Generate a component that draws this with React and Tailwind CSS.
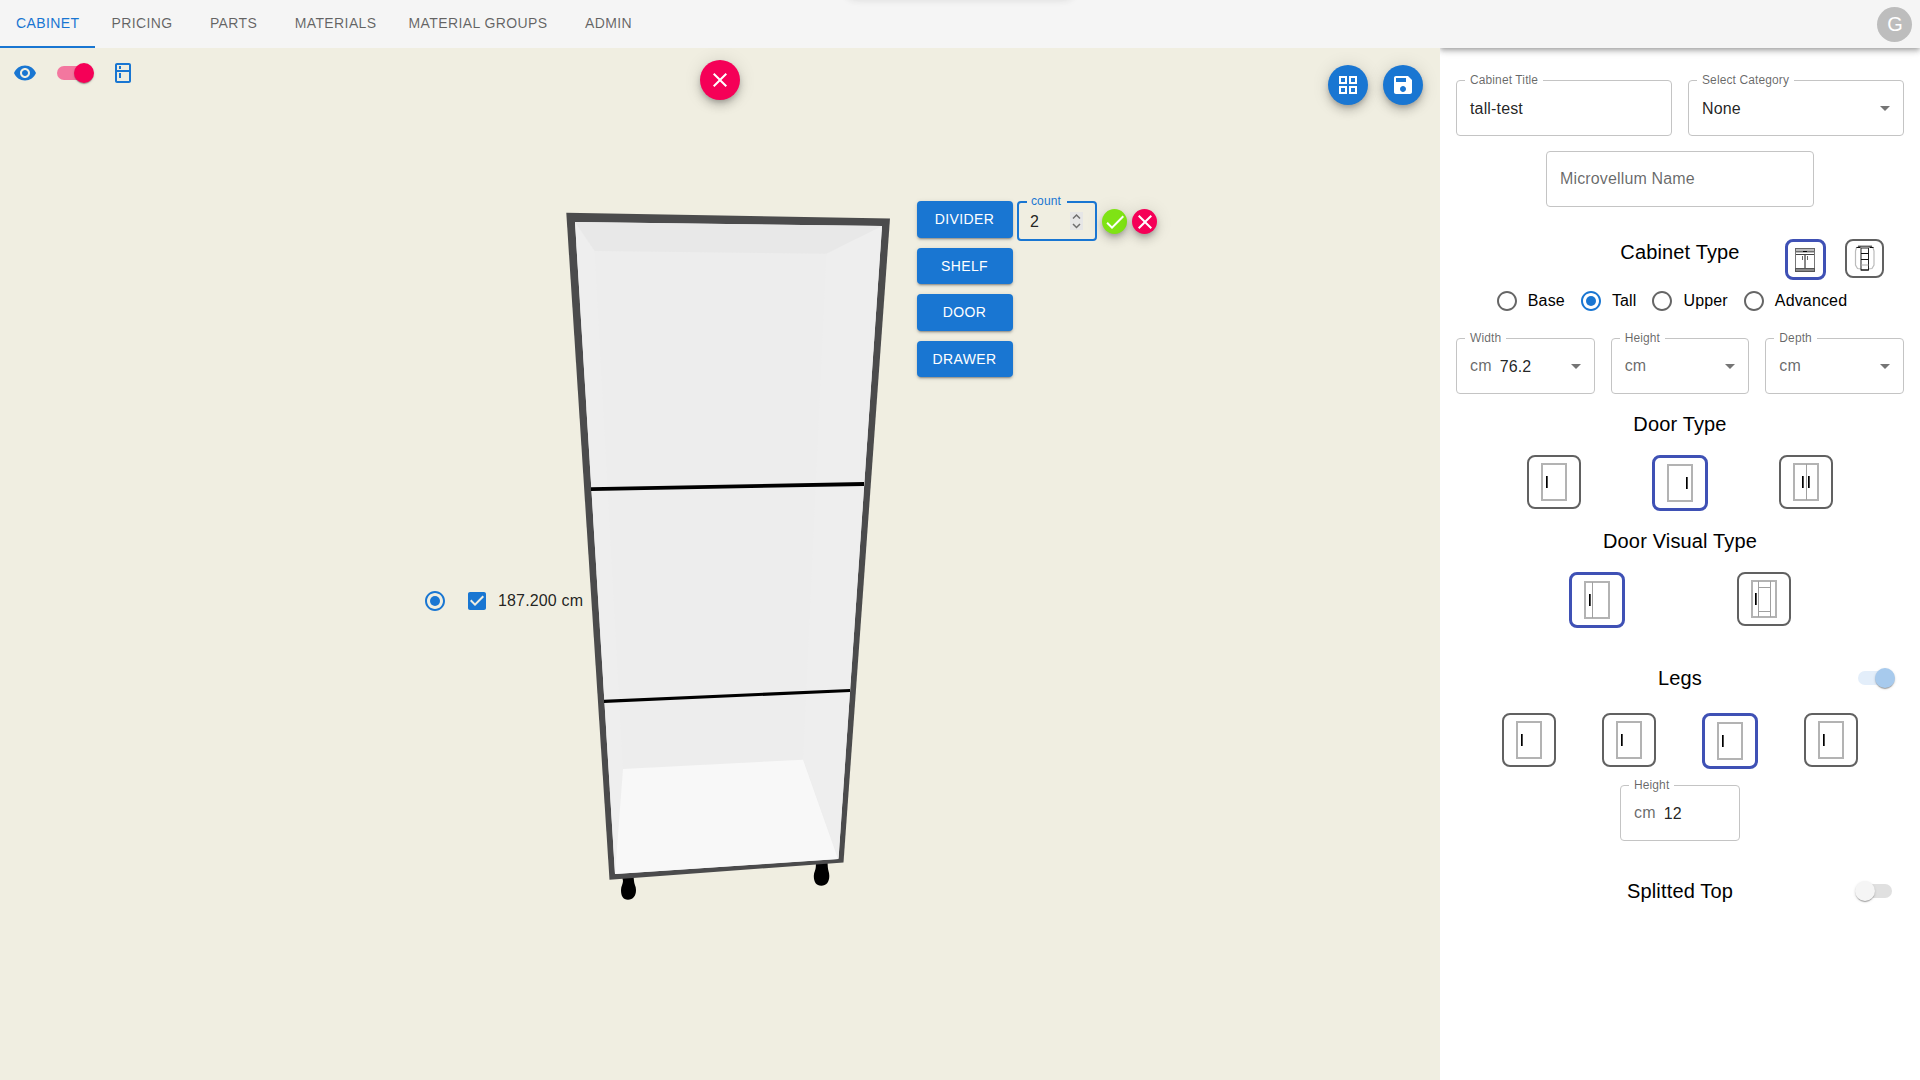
import React from "react";

const ICONS = {
  eye: "M12 4.5C7 4.5 2.73 7.61 1 12c1.73 4.39 6 7.5 11 7.5s9.27-3.11 11-7.5c-1.73-4.39-6-7.5-11-7.5zM12 17c-2.76 0-5-2.24-5-5s2.24-5 5-5 5 2.24 5 5-2.24 5-5 5zm0-8c-1.66 0-3 1.34-3 3s1.34 3 3 3 3-1.34 3-3-1.34-3-3-3z",
  kitchen:
    "M18 2.01 6 2c-1.1 0-2 .89-2 2v16c0 1.1.9 2 2 2h12c1.1 0 2-.9 2-2V4c0-1.1-.9-1.99-2-1.99zM18 20H6v-9.02h12V20zm0-11H6V4h12v5zM8 5h2v3H8V5zm0 7h2v5H8v-5z",
  close:
    "M19 6.41 17.59 5 12 10.59 6.41 5 5 6.41 10.59 12 5 17.59 6.41 19 12 13.41 17.59 19 19 17.59 13.41 12z",
  grid: "M3 3v8h8V3H3zm6 6H5V5h4v4zm-6 4v8h8v-8H3zm6 6H5v-4h4v4zm4-16v8h8V3h-8zm6 6h-4V5h4v4zm-6 4v8h8v-8h-8zm6 6h-4v-4h4v4z",
  save: "M17 3H5c-1.11 0-2 .9-2 2v14c0 1.1.89 2 2 2h14c1.1 0 2-.9 2-2V7l-4-4zm-5 16c-1.66 0-3-1.34-3-3s1.34-3 3-3 3 1.34 3 3-1.34 3-3 3zm3-10H5V5h10v4z",
  done: "M9 16.2 4.8 12l-1.4 1.4L9 19 21 7l-1.4-1.4L9 16.2z",
  arrow: "M7 10l5 5 5-5z",
  radioOff:
    "M12 2C6.48 2 2 6.48 2 12s4.48 10 10 10 10-4.48 10-10S17.52 2 12 2zm0 18c-4.42 0-8-3.58-8-8s3.58-8 8-8 8 3.58 8 8-3.58 8-8 8z",
  checkbox:
    "M19 3H5c-1.11 0-2 .9-2 2v14c0 1.1.89 2 2 2h14c1.11 0 2-.9 2-2V5c0-1.1-.89-2-2-2zm-9 14l-5-5 1.41-1.41L10 14.17l7.59-7.59L19 8l-9 9z",
};

function Icon({ name, className = "" }) {
  return (
    <svg viewBox="0 0 24 24" fill="currentColor" className={"size-6 shrink-0 " + className}>
      <path d={ICONS[name]} />
    </svg>
  );
}

function RadioMark({ checked }) {
  return (
    <svg
      viewBox="0 0 24 24"
      fill="currentColor"
      className={"size-6 shrink-0 " + (checked ? "text-[#1976d2]" : "text-[#666]")}
    >
      <path d={ICONS.radioOff} />
      {checked && <circle cx="12" cy="12" r="5" />}
    </svg>
  );
}

function Tab({ children, active }) {
  return (
    <div
      className={
        "flex h-12 min-w-[90px] items-center justify-center border-b-2 px-4 pt-[2px] text-sm leading-[17.5px] tracking-[0.4px] " +
        (active ? "border-[#1976d2] text-[#1976d2]" : "border-transparent text-black/60")
      }
    >
      {children}
    </div>
  );
}

const FAB_SHADOW =
  "shadow-[0px_3px_5px_-1px_rgba(0,0,0,0.2),0px_6px_10px_0px_rgba(0,0,0,0.14),0px_1px_18px_0px_rgba(0,0,0,0.12)]";

function Fab({ icon, className }) {
  return (
    <button className={"flex items-center justify-center rounded-full text-white " + FAB_SHADOW + " " + className}>
      <Icon name={icon} />
    </button>
  );
}

function Switch({ on, track, thumb }) {
  return (
    <div className="flex h-[38px] w-[58px] items-center px-3">
      <div className={"flex h-[14px] w-[34px] items-center rounded-full " + track}>
        <div
          className={
            "size-5 shrink-0 rounded-full shadow-[0px_2px_1px_-1px_rgba(0,0,0,0.2),0px_1px_1px_0px_rgba(0,0,0,0.14),0px_1px_3px_0px_rgba(0,0,0,0.12)] " +
            thumb +
            (on ? " ml-[17px]" : " -ml-[3px]")
          }
        />
      </div>
    </div>
  );
}

function Field({ label, prefix, value, placeholder, select, className = "" }) {
  return (
    <div
      className={
        "relative flex h-14 items-center rounded border border-[#c4c4c4] pl-[13px] pr-[6px] text-base tracking-[0.15px] " +
        className
      }
    >
      {label && (
        <span className="absolute -top-2 left-2 whitespace-nowrap bg-white pl-[5px] pr-[5px] text-xs leading-[14px] tracking-[0.11px] text-black/60">
          {label}
        </span>
      )}
      {prefix && <span className="mr-2 text-black/60">{prefix}</span>}
      {placeholder && <span className="text-black/60">{placeholder}</span>}
      <span className="pt-px text-black/[0.87]">{value}</span>
      {select && <Icon name="arrow" className="ml-auto text-[#757575]" />}
    </div>
  );
}

function Tile({ selected, small, children }) {
  return (
    <div
      className={
        "box-content shrink-0 rounded-lg bg-white " +
        (small ? "size-[35px] " : "size-[50px] ") +
        (selected ? "border-3 border-[#3f51b5]" : "border-2 border-[#616161]")
      }
    >
      {children}
    </div>
  );
}

function Door({ handles = [17], verticals = [], horizontals = [] }) {
  return (
    <svg viewBox="0 0 50 50" className="size-[50px]">
      <rect x="13" y="7" width="24" height="36" fill="none" stroke="#b3b3b3" strokeWidth="2" />
      {verticals.map((x) => (
        <rect key={x} x={x} y="7" width="1" height="36" fill="#a0a0a0" />
      ))}
      {horizontals.map((y) => (
        <rect key={y} x="19" y={y} width="12" height="1" fill="#a0a0a0" />
      ))}
      {handles.map((x) => (
        <g key={x}>
          <rect x={x} y="19" width="1" height="12" fill="#000" />
          <rect x={x + 1} y="19" width="1" height="12" fill="#4d4d4d" />
        </g>
      ))}
    </svg>
  );
}

function StandardCabinet() {
  return (
    <svg viewBox="0 0 35 35" className="size-[35px]">
      <rect x="7.5" y="6.5" width="19" height="3" fill="#bbb" stroke="#666" />
      <rect x="7.5" y="10" width="19" height="18" fill="#fff" stroke="#777" />
      <path d="M8 12.5h18" stroke="#444" />
      <path d="M15 9.5h4" stroke="#000" />
      <path d="M17 13v14" stroke="#111" />
      <path d="M14.500 14v4M19.500 14v4" stroke="#666" />
      <rect x="7.5" y="26.500" width="19" height="3" fill="#888" stroke="#555" />
    </svg>
  );
}

function CornerCabinet() {
  return (
    <svg viewBox="0 0 35 35" className="size-[35px]">
      <path d="M14 5.500 9.500 6.500 8.500 10v14l2 3.500 4 .5" fill="#fff" stroke="#bbb" strokeWidth="1.200" />
      <path d="M21.500 5.500 26 6.500 27 10v14l-2 3.500-4 .5" fill="#fff" stroke="#bbb" strokeWidth="1.200" />
      <path d="M11 5.200h14" stroke="#222" />
      <path d="M9.500 6.500h4M22.500 6.500h4" stroke="#111" strokeWidth="1.200" />
      <rect x="14" y="7" width="7.500" height="22" fill="#fff" stroke="#222" />
      <path d="M14 12.500h7.500M14 18.500h7.500M14 29h7.500" stroke="#111" />
      <path d="M14 24h7.500" stroke="#aaa" />
    </svg>
  );
}

function CabinetModel() {
  return (
    <svg viewBox="0 0 350 700" className="absolute left-[560px] top-[152px] h-[700px] w-[350px]">
      <g transform="translate(-560 -200)">
        <path
          d="M622 876h11.500l.5 5c0 3 2 5 2 9 0 6-3 9.700-8 9.700s-7-3.700-7-9.700c0-4 2-6 2-9z"
          fill="#000"
        />
        <path
          d="M816 862h11.500l.3 5c0 3 1.500 5 1.500 9 0 6-3 9.800-8 9.800s-7.500-3.800-7.500-9.800c0-4 2-6 2-9z"
          fill="#000"
        />
        <path d="M566.300 212.700 890 218.500 843.500 862.500 609.500 879.700z" fill="#4b4b4c" />
        <path d="M575 222 882 226 838.500 859 615 874z" fill="#ededed" />
        <path d="M575 222 594.700 251 623 769 615 874z" fill="#eeeeee" />
        <path d="M882 226 826.300 253.700 803 759.700 838.500 859z" fill="#eeeeee" />
        <path d="M575 222 882 226 826.300 253.700 594.700 251z" fill="#e8e8e8" />
        <path d="M623 769 803 759.700 838 859 615 874z" fill="#f8f8f8" />
        <path d="M591 487.200 864 482v4L591 491z" fill="#000" />
        <path d="M604 699.700 850 689v3L604 703z" fill="#000" />
      </g>
    </svg>
  );
}

const ACTIONS = ["DIVIDER", "SHELF", "DOOR", "DRAWER"];

function Viewport() {
  return (
    <main className="relative h-[1032px] w-[1440px] overflow-hidden bg-[#f0eee1]">
      <CabinetModel />

      <div className="absolute left-[13px] top-[6px] flex h-[38px] items-center">
        <Icon name="eye" className="text-[#1976d2]" />
        <div className="ml-2">
          <Switch on track="bg-[#f3779f]" thumb="bg-[#f50057]" />
        </div>
        <Icon name="kitchen" className="ml-2 text-[#1976d2]" />
      </div>

      <Fab icon="close" className="absolute left-[700px] top-3 size-10 bg-[#f50057]" />
      <div className="absolute right-[17px] top-[17px] flex gap-[15px]">
        <Fab icon="grid" className="size-10 bg-[#1976d2]" />
        <Fab icon="save" className="size-10 bg-[#1976d2]" />
      </div>

      <div className="absolute left-[423px] top-[541px] flex h-6 items-center text-black/[0.87]">
        <RadioMark checked />
        <Icon name="checkbox" className="ml-[18px] text-[#1976d2]" />
        <span className="ml-[9px] whitespace-nowrap text-base tracking-[0.15px]">187.200 cm</span>
      </div>

      <div className="absolute left-[917px] top-[153px] flex items-start">
        <div className="flex w-24 flex-col gap-[10px]">
          {ACTIONS.map((a) => (
            <button
              key={a}
              className="h-[36.5px] rounded bg-[#1976d2] pr-px text-sm font-medium tracking-[0.4px] text-white shadow-[0px_3px_1px_-2px_rgba(0,0,0,0.2),0px_2px_2px_0px_rgba(0,0,0,0.14),0px_1px_5px_0px_rgba(0,0,0,0.12)]"
            >
              {a}
            </button>
          ))}
        </div>
        <div className="relative ml-1 flex h-10 w-20 items-center rounded border-2 border-[#1976d2] pl-[11px] pr-3 text-base text-black/[0.87]">
          <span className="absolute -top-[9px] left-2 bg-[#f0eee1] pl-1 pr-[6px] text-xs leading-[14px] tracking-[0.11px] text-[#1976d2]">
            count
          </span>
          <span className="pt-[2px]">2</span>
          <svg viewBox="0 0 13 18" className="ml-auto h-[18px] w-[13px] bg-[#e6e6e6]">
            <path d="M3 6.500 6.500 3 10 6.500M3 12l3.500 3.500L10 12" fill="none" stroke="#6f6f6f" strokeWidth="1.500" />
          </svg>
        </div>
        <div className="ml-[5px] mt-2 flex gap-[5px]">
          <Fab icon="done" className="size-[25px] bg-[#7fe314]" />
          <Fab icon="close" className="size-[25px] bg-[#f50057]" />
        </div>
      </div>
    </main>
  );
}

function Title({ children, className = "" }) {
  return (
    <h6 className={"text-center text-xl leading-8 tracking-[0.15px] text-black " + className}>{children}</h6>
  );
}

const TYPES = ["Base", "Tall", "Upper", "Advanced"];

function SidePanel() {
  return (
    <aside className="flex w-[480px] flex-col bg-white px-4 pt-8">
      <div className="grid grid-cols-2 gap-4">
        <Field label="Cabinet Title" value="tall-test" />
        <Field label="Select Category" value="None" select />
      </div>
      <Field placeholder="Microvellum Name" className="mt-[15px] w-[268px] self-center" />

      <div className="mt-8 grid h-[41px] grid-cols-3 items-start">
        <Title className="col-start-2 !leading-[26px]">Cabinet Type</Title>
        <div className="flex items-start justify-end gap-[19px] pr-5">
          <Tile small selected>
            <StandardCabinet />
          </Tile>
          <Tile small>
            <CornerCabinet />
          </Tile>
        </div>
      </div>

      <div className="flex h-[42px] justify-center">
        {TYPES.map((t) => (
          <label key={t} className="-ml-[11px] mr-4 flex items-center text-base tracking-[0.15px]">
            <span className="p-[9px]">
              <RadioMark checked={t === "Tall"} />
            </span>
            {t}
          </label>
        ))}
      </div>

      <div className="mt-4 grid grid-cols-3 gap-4">
        <Field label="Width" prefix="cm" value="76.2" select />
        <Field label="Height" prefix="cm" select />
        <Field label="Depth" prefix="cm" select />
      </div>

      <Title className="mt-[14px]">Door Type</Title>
      <div className="mt-[15px] flex h-14 items-start gap-[71px] pl-[71px]">
        <Tile>
          <Door />
        </Tile>
        <Tile selected>
          <Door handles={[31]} />
        </Tile>
        <Tile>
          <Door handles={[21, 27]} verticals={[25]} />
        </Tile>
      </div>

      <Title className="mt-[14px]">Door Visual Type</Title>
      <div className="mt-[15px] flex h-14 items-start gap-28 pl-[113px]">
        <Tile selected>
          <Door verticals={[20]} />
        </Tile>
        <Tile>
          <Door handles={[16]} verticals={[19, 31]} horizontals={[13, 37]} />
        </Tile>
      </div>

      <div className="mt-[31px] flex items-center">
        <div className="w-[58px]" />
        <Title className="flex-1">Legs</Title>
        <Switch on track="bg-[#e3eefa]" thumb="bg-[#a7caed]" />
      </div>
      <div className="mt-4 flex h-14 items-start gap-[46px] pl-[46px]">
        <Tile>
          <Door />
        </Tile>
        <Tile>
          <Door />
        </Tile>
        <Tile selected>
          <Door />
        </Tile>
        <Tile>
          <Door />
        </Tile>
      </div>
      <Field label="Height" prefix="cm" value="12" className="mt-4 w-[120px] self-center" />

      <div className="mt-[31px] flex items-center">
        <div className="w-[58px]" />
        <Title className="flex-1">Splitted Top</Title>
        <Switch track="bg-[#e0e0e0]" thumb="bg-[#f5f5f5]" />
      </div>
    </aside>
  );
}

export default function App() {
  return (
    <div className="relative flex h-[1080px] w-[1920px] flex-col overflow-hidden bg-white font-['Liberation_Sans',Arial,sans-serif]">
      <header className="flex h-12 shrink-0 items-start bg-[#f5f5f5]">
        <Tab active>CABINET</Tab>
        <Tab>PRICING</Tab>
        <Tab>PARTS</Tab>
        <Tab>MATERIALS</Tab>
        <Tab>MATERIAL GROUPS</Tab>
        <Tab>ADMIN</Tab>
        <div className="ml-auto mr-2 mt-[7px] flex size-[35px] items-center justify-center rounded-full bg-[#bdbdbd] pb-px pl-px text-xl leading-none text-white">
          G
        </div>
      </header>
      <div className="flex h-[1032px]">
        <Viewport />
        <div className="relative overflow-hidden">
          <SidePanel />
          <div className="absolute -top-12 left-0 h-12 w-full shadow-[0px_2px_4px_-1px_rgba(0,0,0,0.2),0px_4px_5px_0px_rgba(0,0,0,0.14),0px_1px_10px_0px_rgba(0,0,0,0.12)]" />
        </div>
      </div>
      <div className="absolute -top-11 left-[849px] h-9 w-[222px] rounded shadow-[0px_6px_10px_0px_rgba(0,0,0,0.14),0px_1px_18px_0px_rgba(0,0,0,0.06)]" />
    </div>
  );
}
